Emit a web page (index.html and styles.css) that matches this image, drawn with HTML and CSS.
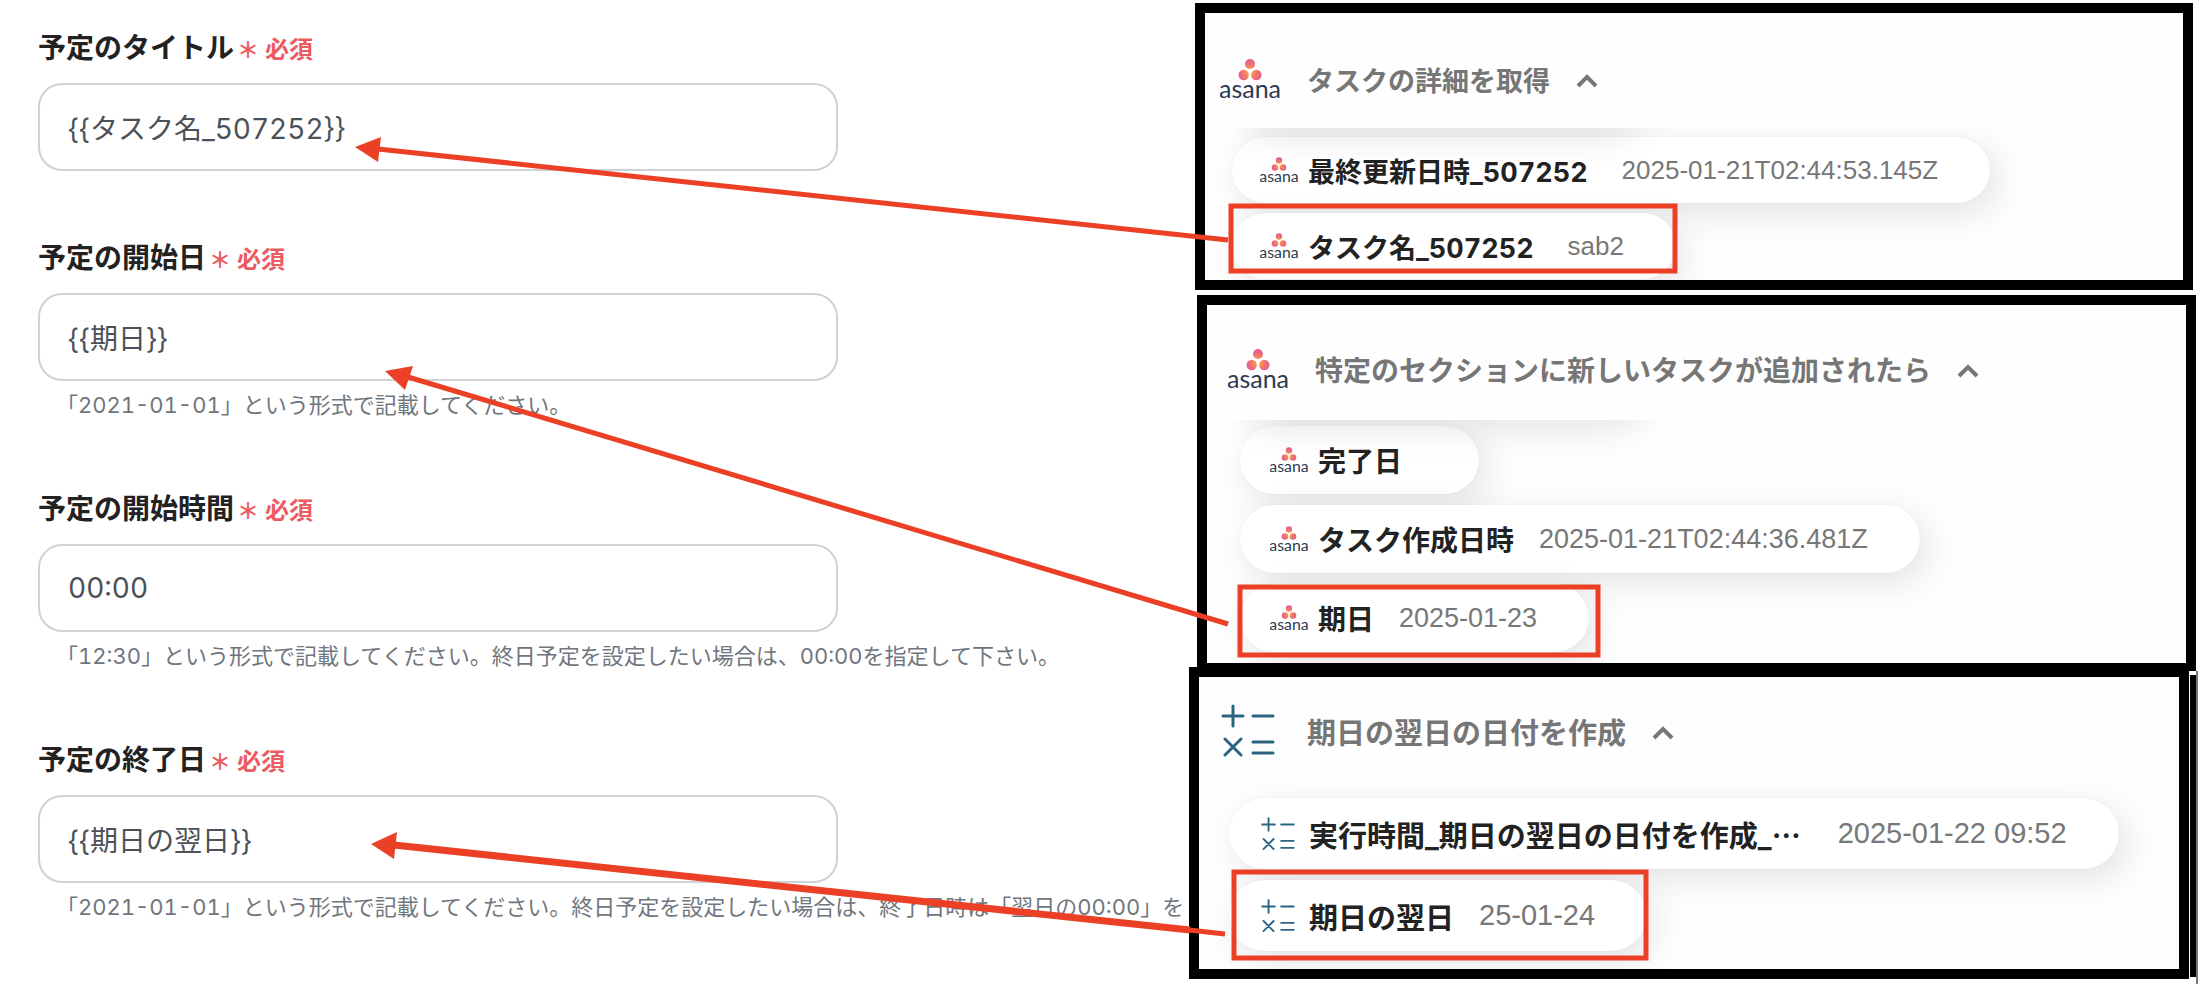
FILE: index.html
```
<!DOCTYPE html>
<html lang="ja">
<head>
  <meta charset="UTF-8">
  <title>予定の登録</title>
  <link rel="stylesheet" href="styles.css">
</head>
<body>

<!-- shared icons -->
<svg class="defs" aria-hidden="true">
  <defs>
    <radialGradient id="asanaFill" gradientUnits="userSpaceOnUse" cx="30" cy="13" r="13">
      <stop offset="0" stop-color="#ffb03a"></stop>
      <stop offset="0.5" stop-color="#f07a66"></stop>
      <stop offset="0.8" stop-color="#e8628c"></stop>
    </radialGradient>
    <symbol id="asana" viewBox="0 0 60 40">
      <g fill="url(#asanaFill)">
        <circle cx="30" cy="5" r="5"></circle>
        <circle cx="23.7" cy="16" r="5.2"></circle>
        <circle cx="36.3" cy="16" r="5.2"></circle>
      </g>
      <text x="30" y="39" text-anchor="middle" font-family="Lato, sans-serif" font-size="25" font-weight="normal" fill="#2e3a52">asana</text>
    </symbol>
    <symbol id="calc" viewBox="0 0 54 54">
      <g stroke="#2b6482" stroke-linecap="round" stroke-width="3" fill="none">
        <path d="M2 12h20M12 2v20M32 12h20M4 35l16 16M20 35l-16 16M32 38h20M32 49h20"></path>
      </g>
    </symbol>
    <symbol id="up" viewBox="0 0 24 16">
      <path d="M3 13l9-9 9 9" stroke="#767676" stroke-width="4" fill="none"></path>
    </symbol>
  </defs>
</svg>

<main class="board">

  <form class="form">
    <div class="field">
      <label for="title">予定のタイトル<span class="must"><span class="star">＊</span>必須</span></label>
      <input type="text" id="title" value="{{タスク名_507252}}">
    </div>
    <div class="field">
      <label for="startDate">予定の開始日<span class="must"><span class="star">＊</span>必須</span></label>
      <input type="text" id="startDate" value="{{期日}}">
      <p class="help">「2021-01-01」という形式で記載してください。</p>
    </div>
    <div class="field">
      <label for="startTime">予定の開始時間<span class="must"><span class="star">＊</span>必須</span></label>
      <input type="text" id="startTime" value="00:00">
      <p class="help">「12:30」という形式で記載してください。終日予定を設定したい場合は、00:00を指定して下さい。</p>
    </div>
    <div class="field">
      <label for="endDate">予定の終了日<span class="must"><span class="star">＊</span>必須</span></label>
      <input type="text" id="endDate" value="{{期日の翌日}}">
      <p class="help">「2021-01-01」という形式で記載してください。終日予定を設定したい場合は、終了日時は「翌日の00:00」を</p>
    </div>
  </form>

  <div class="panels">
    <section class="panel detail">
      <button type="button" class="head">
        <svg class="logo"><use href="#asana"></use></svg>
        <span>タスクの詳細を取得</span>
        <svg class="up"><use href="#up"></use></svg>
      </button>
      <div class="list">
        <button type="button" class="pill"><svg class="mini"><use href="#asana"></use></svg><b>最終更新日時_507252</b><span class="value">2025-01-21T02:44:53.145Z</span></button>
        <button type="button" class="pill"><svg class="mini"><use href="#asana"></use></svg><b>タスク名_507252</b><span class="value">sab2</span></button>
      </div>
    </section>

    <section class="panel trigger">
      <button type="button" class="head">
        <svg class="logo"><use href="#asana"></use></svg>
        <span>特定のセクションに新しいタスクが追加されたら</span>
        <svg class="up"><use href="#up"></use></svg>
      </button>
      <div class="list">
        <button type="button" class="pill"><svg class="mini"><use href="#asana"></use></svg><b>完了日</b><span class="value"></span></button>
        <button type="button" class="pill"><svg class="mini"><use href="#asana"></use></svg><b>タスク作成日時</b><span class="value">2025-01-21T02:44:36.481Z</span></button>
        <button type="button" class="pill"><svg class="mini"><use href="#asana"></use></svg><b>期日</b><span class="value">2025-01-23</span></button>
      </div>
    </section>

    <section class="panel nextday">
      <button type="button" class="head">
        <svg class="logo"><use href="#calc"></use></svg>
        <span>期日の翌日の日付を作成</span>
        <svg class="up"><use href="#up"></use></svg>
      </button>
      <div class="list">
        <button type="button" class="pill"><svg class="mini"><use href="#calc"></use></svg><b>実行時間_期日の翌日の日付を作成_<span class="more">…</span></b><span class="value">2025-01-22 09:52</span></button>
        <button type="button" class="pill"><svg class="mini"><use href="#calc"></use></svg><b>期日の翌日</b><span class="value">25-01-24</span></button>
      </div>
    </section>
  </div>

  <!-- red boxes and arrows from each item to its field -->
  <svg class="notes" viewBox="0 0 2198 984" aria-hidden="true">
    <!-- edge of the frame behind the last panel -->
    <path d="M2189 671h7v2h-7z" fill="#fff"></path>
    <path d="M2190 675h6v302h-6z" fill="#000"></path>
    <path d="M2196 671h2v313h-2z" fill="#777"></path>
    <g fill="none" stroke="#eb4025" stroke-width="5">
      <rect x="1231" y="206" width="444" height="65"></rect>
      <rect x="1240" y="587" width="358" height="68"></rect>
      <rect x="1234" y="872" width="412" height="86"></rect>
      <path d="M1228 240L378 149M1228 624L408 377"></path>
      <path d="M1225 934L1189 930"></path>
      <path d="M1190 930L394 845" stroke-width="7"></path>
    </g>
    <g fill="#eb4025">
      <path d="M355 147L381 137L378 162z"></path>
      <path d="M385 371L413 366L405 390z"></path>
      <path d="M371 844L397 832L394 859z"></path>
    </g>
  </svg>

</main>

</body>
</html>
```
FILE: styles.css
```
* {
  box-sizing: border-box;
}
body {
  margin: 0;
  background-color: #fff;
  font-family: Inter, "Noto Sans CJK JP", sans-serif;
  font-feature-settings: "tnum";
}
.defs {
  position: absolute;
  width: 0;
  height: 0;
}
.board {
  position: relative;
  display: grid;
  grid-template-columns: 1189fr 1009fr;
  overflow: hidden;
}

/* form on the left */
.form {
  min-width: 0;
  padding: 30px 0 0 38px;
  overflow: hidden;
}
.field {
  margin-bottom: 69px;
}
label {
  display: block;
  height: 37px;
  line-height: 37px;
  margin-bottom: 16px;
  font-size: 28px;
  font-weight: bold;
  color: #222;
}
.must {
  font-size: 24px;
  color: #ec5a62;
}
.star {
  margin: 0 6px 0 3px;
  font-size: 22px;
}
input {
  display: block;
  width: 800px;
  max-width: 100%;
  height: 88px;
  padding: 0 28px;
  border: 2px solid #cdd2d7;
  border-radius: 24px;
  font: inherit;
  font-size: 28px;
  font-feature-settings: "tnum";
  color: #4b5158;
}
.help {
  margin: 8px 0 0;
  padding-left: 18px;
  font-size: 22px;
  line-height: 33px;
  white-space: nowrap;
  color: #6f767e;
}

/* output panels on the right */
.panels {
  min-width: 0;
}
.panel {
  border: 10px solid #000;
  background-color: #fefefe;
  overflow: hidden;
}
.head {
  display: flex;
  align-items: center;
  width: 100%;
  padding: 0;
  border: 0;
  background: none;
  font: inherit;
  font-weight: bold;
  color: #767676;
}
.logo {
  width: 60px;
  height: 40px;
  margin-right: 27px;
}
.up {
  width: 24px;
  height: 16px;
  margin: 4px 0 0 25px;
}
.list {
  position: relative;
  display: flex;
  flex-direction: column;
  align-items: flex-start;
  overflow: hidden;
}
.pill {
  display: flex;
  align-items: center;
  flex: none;
  padding: 0 52px 0 28px;
  border: 0;
  border-radius: 36px;
  background-color: #fff;
  box-shadow: 0 0 2px #0001, 8px 10px 36px #0000001c;
  font: inherit;
  font-feature-settings: "tnum";
  white-space: nowrap;
  color: #222;
}
.value {
  margin-left: 25px;
  font-family: "Liberation Sans", sans-serif;
  color: #777;
}
.more {
  margin-right: 12px;
  font-family: "Noto Sans CJK JP", sans-serif;
}
.mini {
  width: 38px;
  height: 26px;
  margin-right: 10px;
}

.detail {
  margin: 3px 5px 0 6px;
  font-size: 27px;
}
.detail .head {
  height: 115px;
  padding: 17px 0 0 15px;
}
.detail .list {
  padding: 9px 0 1px 27px;
  gap: 10px;
}
.detail .pill {
  height: 66px;
}
.detail .value {
  margin-left: 34px;
  font-size: 26px;
}

.trigger {
  margin: 5px 2px 0 8px;
  font-size: 28px;
}
.trigger .head {
  height: 115px;
  padding: 12px 0 0 21px;
}
.trigger .list {
  padding: 6px 0 11px 33px;
  gap: 11px;
}
.trigger .pill {
  height: 68px;
  padding-left: 30px;
}
.trigger .value {
  font-size: 27px;
}

.nextday {
  position: relative;
  margin: -6px 9px 0 0;
  font-size: 29px;
}
.nextday .head {
  height: 106px;
  padding: 2px 0 0 22px;
}
.nextday .logo {
  width: 54px;
  height: 54px;
  margin-right: 32px;
}
.nextday .list {
  padding: 15px 0 18px 30px;
  gap: 11px;
}
.nextday .pill {
  height: 71px;
  padding-left: 32px;
}
.nextday .mini {
  width: 34px;
  height: 34px;
  margin-right: 14px;
}

/* shadow of the item scrolled away above the list */
.detail .list::before,
.trigger .list::before {
  content: "";
  position: absolute;
  top: -68px;
  left: 30px;
  width: 400px;
  height: 66px;
  border-radius: 36px;
  box-shadow: 8px 10px 36px #0000001c;
}

.notes {
  position: absolute;
  top: 0;
  left: 0;
  width: 100%;
  pointer-events: none;
}
```
